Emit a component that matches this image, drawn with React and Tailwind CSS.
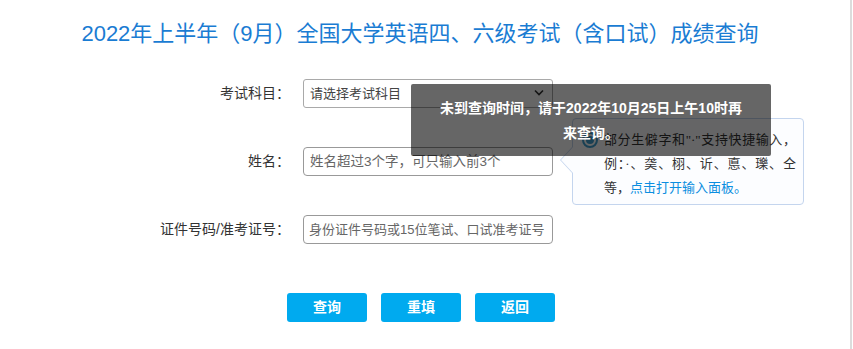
export default function App() {
  const font = { fontFamily: '"Liberation Sans", "Noto Sans CJK SC", sans-serif' };

  return (
    <div className="flex h-[349px] w-[853px] bg-white" style={font}>
      <div className="relative w-[852px] border-r-2 border-[#dcdcdc]">
        <div className="w-[840px]">
          {/* title */}
          <h1 className="pt-[19px] text-center text-[22px] leading-[30px] text-[#1a7cd3]">
            2022年上半年（9月）全国大学英语四、六级考试（含口试）成绩查询
          </h1>

          <div className="mx-auto mt-[30px] w-[580px]">
            {/* subject */}
            <div className="flex items-center">
              <label className="w-[173px] pr-[13px] text-right text-[14px] text-[#333]">
                考试科目：
              </label>
              <div className="relative flex h-[29px] w-[250px] items-center rounded-[3px] border border-[#a9a9a9] bg-white pl-[6px] pr-[8px] text-[13px] text-[#444]">
                <span className="flex-1">请选择考试科目</span>
                <svg width="10" height="7" viewBox="0 0 10 7" className="mb-[2px]">
                  <path d="M1 1.5 L5 5.5 L9 1.5" fill="none" stroke="#333" strokeWidth="1.6" />
                </svg>
              </div>
            </div>

            {/* name */}
            <div className="relative mt-[39px] flex items-center">
              <label className="w-[173px] pr-[13px] text-right text-[14px] text-[#333]">
                姓名：
              </label>
              <input
                className="h-[29px] w-[250px] rounded-[4px] border border-[#999] px-[6px] text-[13.5px] text-[#333] outline-none placeholder:text-[#666]"
                placeholder="姓名超过3个字，可只输入前3个"
              />

              {/* hint popover */}
              <div className="absolute left-[442px] top-[-29px] w-[232px] rounded-[4px] border border-[#c4d5ee] bg-[#fcfdff] py-[9px] pb-[4px] pl-[9px] pr-[7px]">
                <div className="absolute left-[-13px] top-[27px] h-0 w-0 border-y-[14px] border-r-[13px] border-y-transparent border-r-[#c4d5ee]" />
                <div className="absolute left-[-12px] top-[27px] h-0 w-0 border-y-[14px] border-r-[13px] border-y-transparent border-r-[#fcfdff]" />
                <div className="flex gap-[6px]">
                  <div className="mt-[4px] flex h-[16px] w-[16px] shrink-0 items-center justify-center rounded-full border-2 border-[#3f9fd0] bg-white">
                    <div className="h-[8px] w-[8px] rounded-full bg-[#3f9fd0]" />
                  </div>
                  <p
                    className="text-justify text-[13px] leading-[24px] text-[#333]"
                    style={{ fontFamily: '"Liberation Serif", "Noto Sans CJK SC", serif' }}
                  >
                    部分生僻字和"·"支持快捷输入，例：·、䶮、栩、䜣、悳、瓅、仝等，
                    <span className="text-[#0b8ee0]">点击打开输入面板。</span>
                  </p>
                </div>
              </div>
            </div>

            {/* id */}
            <div className="mt-[39px] flex items-center">
              <label className="w-[173px] pr-[13px] text-right text-[14px] text-[#333]">
                证件号码/准考证号：
              </label>
              <input
                className="h-[29px] w-[250px] rounded-[4px] border border-[#999] px-[5px] text-[13px] text-[#333] outline-none placeholder:text-[#666]"
                placeholder="身份证件号码或15位笔试、口试准考证号"
              />
            </div>
          </div>

          {/* buttons */}
          <div className="mt-[49px] flex justify-center gap-[14px] pl-[2px]">
            {["查询", "重填", "返回"].map((b) => (
              <button
                key={b}
                className="h-[29px] w-[80px] rounded-[3px] bg-[#00aaef] text-[14px] font-bold text-white"
              >
                {b}
              </button>
            ))}
          </div>
        </div>

        {/* toast message */}
        <div className="absolute left-[411px] top-[84px] w-[360px] rounded-[2px] bg-black/60 px-[20px] pb-[10px] pt-[12px] text-center text-[14px] font-bold leading-[25px] text-white">
          <div className="whitespace-nowrap">未到查询时间，请于2022年10月25日上午10时再</div>
          <div>来查询。</div>
        </div>
      </div>
    </div>
  );
}
